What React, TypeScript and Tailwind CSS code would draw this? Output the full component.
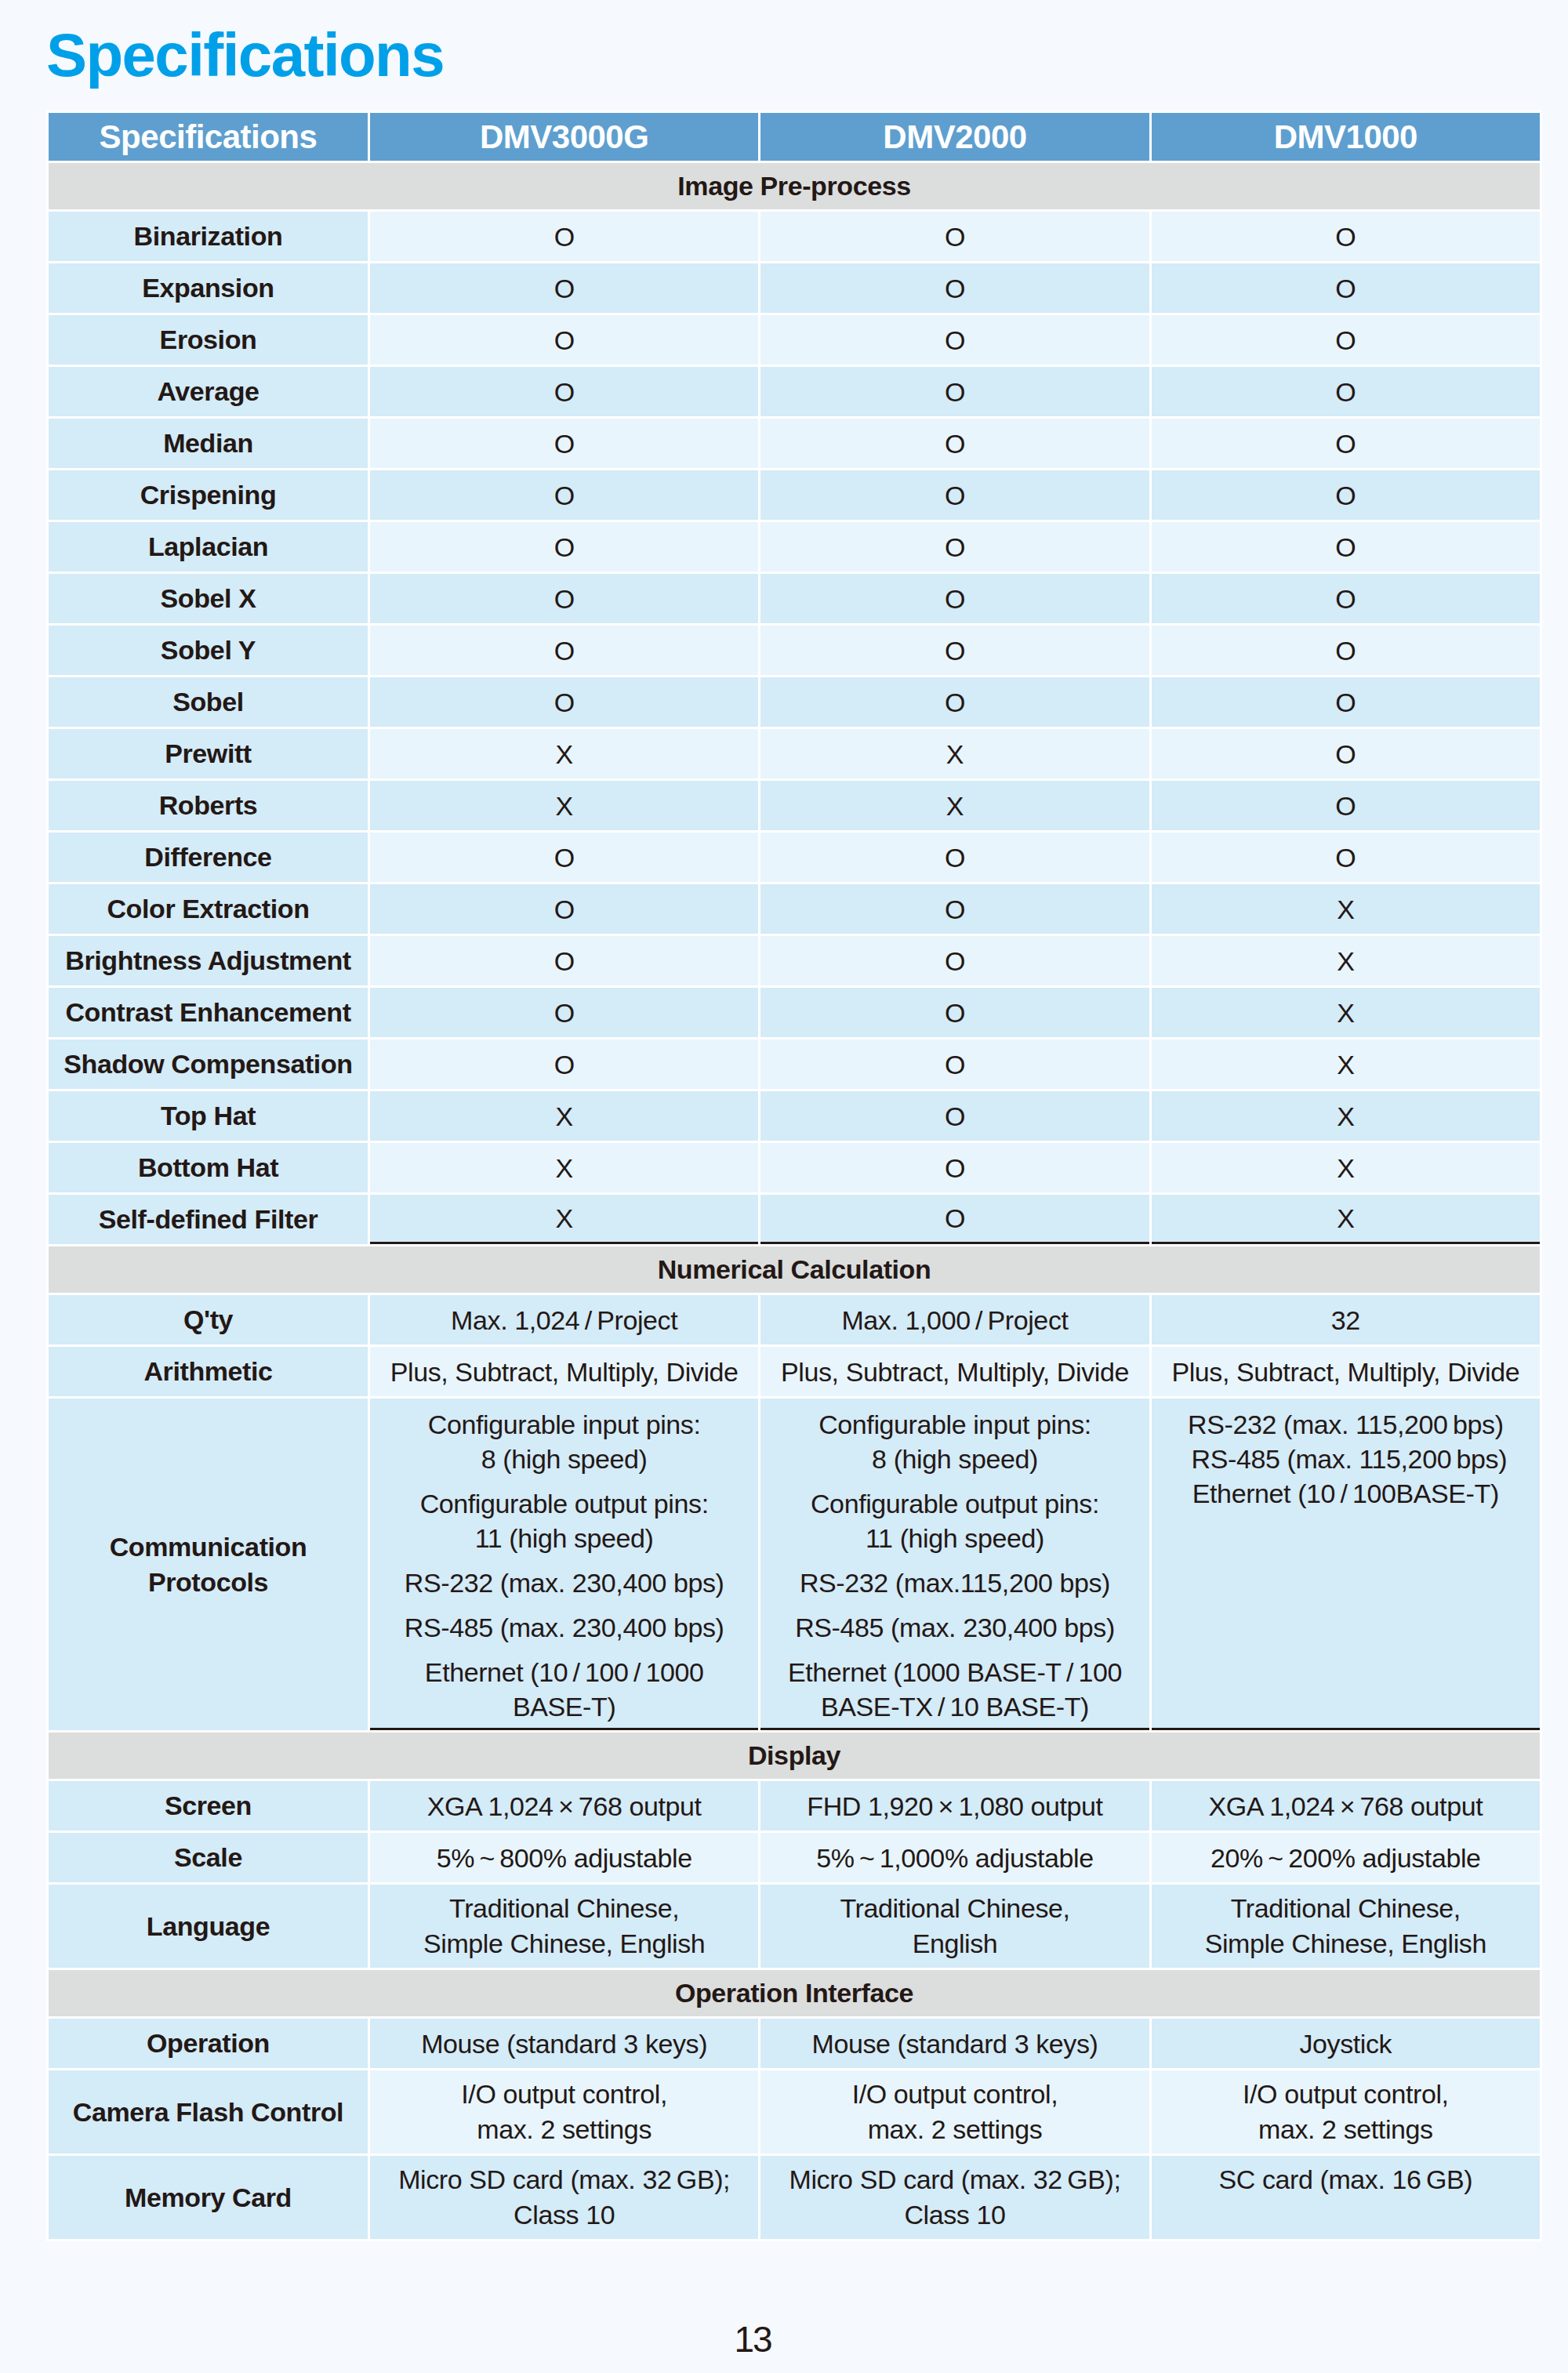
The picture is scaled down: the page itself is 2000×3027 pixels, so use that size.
import type { ReactNode } from "react"

type Row = {
  label: string[]
  cells: string[][]
  tall?: boolean
  dark: boolean
  rule?: boolean
}

type Section = {
  title: string
  rows: Row[]
}

const filterRows: [string, string, string, string][] = [
  ["Binarization", "O", "O", "O"],
  ["Expansion", "O", "O", "O"],
  ["Erosion", "O", "O", "O"],
  ["Average", "O", "O", "O"],
  ["Median", "O", "O", "O"],
  ["Crispening", "O", "O", "O"],
  ["Laplacian", "O", "O", "O"],
  ["Sobel X", "O", "O", "O"],
  ["Sobel Y", "O", "O", "O"],
  ["Sobel", "O", "O", "O"],
  ["Prewitt", "X", "X", "O"],
  ["Roberts", "X", "X", "O"],
  ["Difference", "O", "O", "O"],
  ["Color Extraction", "O", "O", "X"],
  ["Brightness Adjustment", "O", "O", "X"],
  ["Contrast Enhancement", "O", "O", "X"],
  ["Shadow Compensation", "O", "O", "X"],
  ["Top Hat", "X", "O", "X"],
  ["Bottom Hat", "X", "O", "X"],
  ["Self-defined Filter", "X", "O", "X"],
]

// thin space, used round slashes and units as in the print layout
const T = "\u2009"

const sections: Section[] = [
  {
    title: "Image Pre-process",
    rows: filterRows.map(([label, a, b, c], i) => ({
      label: [label],
      cells: [[a], [b], [c]],
      dark: i % 2 === 1,
      rule: i === filterRows.length - 1,
    })),
  },
  {
    title: "Numerical Calculation",
    rows: [
      {
        label: ["Q'ty"],
        cells: [[`Max. 1,024${T}/${T}Project`], [`Max. 1,000${T}/${T}Project`], ["32"]],
        dark: true,
      },
      {
        label: ["Arithmetic"],
        cells: [
          ["Plus, Subtract, Multiply, Divide"],
          ["Plus, Subtract, Multiply, Divide"],
          ["Plus, Subtract, Multiply, Divide"],
        ],
        dark: false,
      },
    ],
  },
  {
    title: "Display",
    rows: [
      {
        label: ["Screen"],
        cells: [
          [`XGA 1,024${T}×${T}768 output`],
          [`FHD 1,920${T}×${T}1,080 output`],
          [`XGA 1,024${T}×${T}768 output`],
        ],
        dark: true,
      },
      {
        label: ["Scale"],
        cells: [
          [`5%${T}~${T}800% adjustable`],
          [`5%${T}~${T}1,000% adjustable`],
          [`20%${T}~${T}200% adjustable`],
        ],
        dark: false,
      },
      {
        label: ["Language"],
        cells: [
          ["Traditional Chinese,", "Simple Chinese, English"],
          ["Traditional Chinese,", "English"],
          ["Traditional Chinese,", "Simple Chinese, English"],
        ],
        dark: true,
        tall: true,
      },
    ],
  },
  {
    title: "Operation Interface",
    rows: [
      {
        label: ["Operation"],
        cells: [["Mouse (standard 3 keys)"], ["Mouse (standard 3 keys)"], ["Joystick"]],
        dark: true,
      },
      {
        label: ["Camera Flash Control"],
        cells: [
          ["I/O output control,", "max. 2 settings"],
          ["I/O output control,", "max. 2 settings"],
          ["I/O output control,", "max. 2 settings"],
        ],
        dark: false,
        tall: true,
      },
      {
        label: ["Memory Card"],
        cells: [
          [`Micro SD card (max. 32${T}GB);`, "Class 10"],
          [`Micro SD card (max. 32${T}GB);`, "Class 10"],
          [`SC card (max. 16${T}GB)`],
        ],
        dark: true,
        tall: true,
      },
    ],
  },
]

const commCells: string[][][] = [
  [
    ["Configurable input pins:", "8 (high speed)"],
    ["Configurable output pins:", "11 (high speed)"],
    ["RS-232 (max. 230,400 bps)"],
    ["RS-485 (max. 230,400 bps)"],
    [`Ethernet (10${T}/${T}100${T}/${T}1000`, "BASE-T)"],
  ],
  [
    ["Configurable input pins:", "8 (high speed)"],
    ["Configurable output pins:", "11 (high speed)"],
    ["RS-232 (max.115,200 bps)"],
    ["RS-485 (max. 230,400 bps)"],
    [`Ethernet (1000 BASE-T${T}/${T}100`, `BASE-TX${T}/${T}10 BASE-T)`],
  ],
  [[`RS-232 (max. 115,200${T}bps)`, `\u00a0RS-485 (max. 115,200${T}bps)`, `Ethernet (10${T}/${T}100BASE-T)`]],
]

const LIGHT = "bg-[#e8f5fd]"
const DARK = "bg-[#d4ebf8]"

function Label({ children, height }: { children: ReactNode; height: string }) {
  return (
    <div
      className={`flex flex-col items-center justify-center ${DARK} ${height} text-center font-bold leading-[45px]`}
    >
      {children}
    </div>
  )
}

function SectionHead({ title }: { title: string }) {
  return (
    <div className="col-span-4 flex h-[59px] items-center justify-center bg-[#dcdddd] font-bold">
      {title}
    </div>
  )
}

export default function App() {
  return (
    <div
      className="min-h-[3027px] w-full bg-[#f6f9fd] text-[#231815]"
      style={{ fontFamily: '"Liberation Sans", Arial, sans-serif' }}
    >
      <div className="px-[59px] pt-[31px]">
        <h1 className="text-[78px] font-bold leading-none tracking-[-0.02em] text-[#00a0e9]">
          Specifications
        </h1>

        <div className="mt-[32px] grid w-[1908px] grid-cols-[407px_1fr_1fr_1fr] gap-[3px] bg-white p-[3px] text-[34px] tracking-[-0.4px]">
          {["Specifications", "DMV3000G", "DMV2000", "DMV1000"].map((h) => (
            <div
              key={h}
              className="flex h-[61px] items-center justify-center bg-[#5e9fcf] text-[42px] font-bold tracking-[-0.5px] text-white"
            >
              {h}
            </div>
          ))}

          {sections.map((s, si) => (
            <SectionBlock key={s.title} section={s} withComm={si === 1} />
          ))}
        </div>

        <div className="mt-[102px] w-[1802px] text-center text-[46px] leading-none tracking-[-2px]">
          13
        </div>
      </div>
    </div>
  )
}

function SectionBlock({ section, withComm }: { section: Section; withComm: boolean }) {
  return (
    <>
      <SectionHead title={section.title} />
      {section.rows.map((r) => (
        <DataRow key={r.label.join(" ")} row={r} />
      ))}
      {withComm && (
        <>
          <Label height="h-[423px]">
            <span>Communication</span>
            <span>Protocols</span>
          </Label>
          {commCells.map((paras, ci) => (
            <div
              key={ci}
              className={`${DARK} flex h-[423px] flex-col items-center gap-[13px] border-b-[3px] border-[#231815] pt-[11px] text-center leading-[44px]`}
            >
              {paras.map((p, pi) => (
                <div key={pi}>
                  {p.map((line) => (
                    <div key={line}>{line}</div>
                  ))}
                </div>
              ))}
            </div>
          ))}
        </>
      )}
    </>
  )
}

function DataRow({ row }: { row: Row }) {
  const height = row.tall ? "h-[106px]" : "h-[63px]"
  return (
    <>
      <Label height={height}>
        {row.label.map((l) => (
          <span key={l}>{l}</span>
        ))}
      </Label>
      {row.cells.map((lines, ci) => (
        <div
          key={ci}
          className={`flex flex-col items-center text-center ${height} ${row.dark ? DARK : LIGHT} ${
            row.tall ? "justify-start pt-[8px] leading-[45px]" : "justify-center leading-[44px]"
          } ${row.rule ? "border-b-[3px] border-[#231815]" : ""}`}
        >
          {lines.map((l) => (
            <span key={l}>{l}</span>
          ))}
        </div>
      ))}
    </>
  )
}
